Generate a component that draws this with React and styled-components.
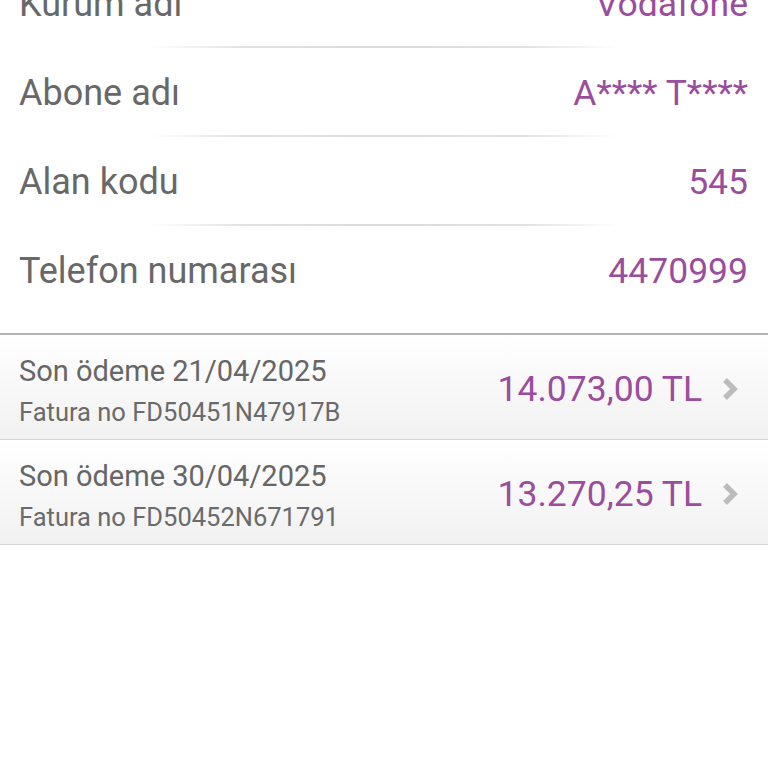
import styled, { createGlobalStyle } from "styled-components";

const GlobalStyle = createGlobalStyle`
  html, body {
    margin: 0;
    padding: 0;
    background: #ffffff;
    font-family: Roboto, "Noto Sans", "Liberation Sans", sans-serif;
  }
`;

const Page = styled.div`
  width: 768px;
  height: 768px;
  overflow: hidden;
  background: #ffffff;
`;

const InfoList = styled.div`
  margin-top: -41px;
  padding-bottom: 20px;
  border-bottom: 2px solid #b4b4b4;
`;

const InfoRow = styled.div`
  display: flex;
  align-items: center;
  justify-content: space-between;
  height: 87px;
  padding: 3px 20px 0 19px;
  box-sizing: border-box;
`;

const Label = styled.span`
  font-size: 36px;
  color: #686868;
`;

const Value = styled.span`
  font-size: 35.5px;
  color: #9a4d9d;
`;

const Separator = styled.div`
  height: 2px;
  margin: 0 150px;
  background: linear-gradient(
    to right,
    rgba(224, 224, 224, 0),
    #e2e2e2 20%,
    #dcdcdc 50%,
    #e2e2e2 80%,
    rgba(224, 224, 224, 0)
  );
`;

const InvoiceRow = styled.div`
  display: flex;
  align-items: center;
  justify-content: space-between;
  height: 105px;
  padding: 0 28px 0 19px;
  box-sizing: border-box;
  background: linear-gradient(to bottom, #ffffff, #f1f1f1);
  border-bottom: 1px solid #d4d4d4;
  cursor: pointer;
`;

const InvoiceInfo = styled.div`
  display: flex;
  flex-direction: column;
  gap: 8px;
  padding-top: 6px;
`;

const DueDate = styled.span`
  font-size: 29px;
  color: #666666;
  line-height: 36px;
`;

const InvoiceNo = styled.span`
  font-size: 25.5px;
  color: #6a6a6a;
  line-height: 30px;
`;

const AmountWrap = styled.div`
  display: flex;
  align-items: center;
  gap: 18px;
  padding-top: 4px;
`;

const Amount = styled.span`
  font-size: 35.5px;
  color: #9a4d9d;
`;

const Chevron = () => (
  <svg width="20" height="24" viewBox="0 0 20 24">
    <polyline
      points="5,3 14,12 5,21"
      fill="none"
      stroke="#bcbcbc"
      strokeWidth="5.5"
      strokeLinejoin="miter"
    />
  </svg>
);

const info = [
  ["Kurum adı", "Vodafone"],
  ["Abone adı", "A**** T****"],
  ["Alan kodu", "545"],
  ["Telefon numarası", "4470999"],
];

const invoices = [
  { due: "21/04/2025", no: "FD50451N47917B", amount: "14.073,00 TL" },
  { due: "30/04/2025", no: "FD50452N671791", amount: "13.270,25 TL" },
];

export default function App() {
  return (
    <Page>
      <GlobalStyle />
      <InfoList>
        {info.map(([label, value], i) => (
          <div key={label}>
            {i > 0 && <Separator />}
            <InfoRow>
              <Label>{label}</Label>
              <Value>{value}</Value>
            </InfoRow>
          </div>
        ))}
      </InfoList>
      {invoices.map((inv) => (
        <InvoiceRow key={inv.no}>
          <InvoiceInfo>
            <DueDate>Son ödeme {inv.due}</DueDate>
            <InvoiceNo>Fatura no {inv.no}</InvoiceNo>
          </InvoiceInfo>
          <AmountWrap>
            <Amount>{inv.amount}</Amount>
            <Chevron />
          </AmountWrap>
        </InvoiceRow>
      ))}
    </Page>
  );
}
